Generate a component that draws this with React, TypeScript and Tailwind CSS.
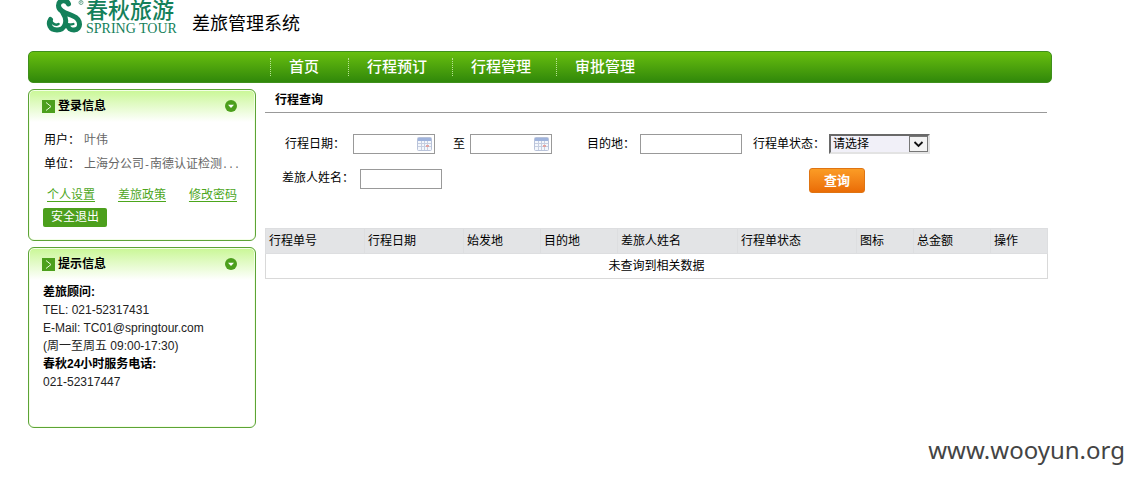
import React from 'react';

const navItems = [
  { label: '首页', width: 'w-[78px]' },
  { label: '行程预订', width: 'w-[104px]' },
  { label: '行程管理', width: 'w-[104px]' },
  { label: '审批管理', width: 'w-[104px]' },
];

const columns = [
  { label: '行程单号', width: 'w-[99px]' },
  { label: '行程日期', width: 'w-[99px]' },
  { label: '始发地', width: 'w-[77px]' },
  { label: '目的地', width: 'w-[77px]' },
  { label: '差旅人姓名', width: 'w-[120px]' },
  { label: '行程单状态', width: 'w-[119px]' },
  { label: '图标', width: 'w-[57px]' },
  { label: '总金额', width: 'w-[77px]' },
  { label: '操作', width: 'w-[57px]' },
];

function LogoMark() {
  return (
    <svg className="h-[34px] w-[39px] shrink-0" viewBox="0 0 39 34" fill="none" aria-hidden="true">
      <g stroke="#14805a" strokeLinecap="round" strokeLinejoin="round">
        <path d="M22.500 4C20.500 -1 12.500 0 12.500 5.500C12.500 11.500 20 13 27 16C35.500 19.500 35.500 29.500 28 30C24.500 30 22 28 22 25.500" strokeWidth="5" />
        <path d="M17 13C22.500 21 19 30 11 30C3.500 30 2 23.500 4.500 19.500" strokeWidth="5" />
        <path d="M5 20.500C6.500 24.500 10 25.500 12.500 24" strokeWidth="2.600" />
        <path d="M22.500 24.500C24.500 24.500 26 24.500 27.500 24" strokeWidth="2.200" />
      </g>
      <circle cx="35" cy="2.500" r="2" stroke="#70a995" strokeWidth="1" />
      <path d="M34.500 3.500V1.500H35.500V2.500H34.500" stroke="#70a995" strokeWidth=".6" />
    </svg>
  );
}

function CalendarIcon() {
  return (
    <svg className="h-[14px] w-[15px]" viewBox="0 0 15 14" aria-hidden="true">
      <rect x=".5" y=".5" width="14" height="13" rx="1" fill="#f4f7fc" stroke="#b9c3da" />
      <rect x="1" y="1" width="13" height="3" fill="#9fb3dc" />
      <path d="M1 6.500H14M1 9.500H14M4.500 4V13M7.500 4V13M10.500 4V13" stroke="#c6cee0" />
      <rect x="9" y="8" width="3" height="2" fill="#e3a3a0" />
    </svg>
  );
}

function DateField({ id, label }: { id: string; label: string }) {
  return (
    <span className="flex h-5 w-[82px] items-center border border-[#999] bg-white pr-[2px]">
      <input id={id} aria-label={label} className="h-full w-0 flex-1 px-1 outline-none" />
      <button type="button" aria-label={`选择${label}`}>
        <CalendarIcon />
      </button>
    </span>
  );
}

function Panel({ title, height, children }: { title: string; height: string; children: React.ReactNode }) {
  return (
    <section
      className={`${height} rounded-md border border-[#5ca336] bg-[linear-gradient(to_bottom,#c9f795_0px,#ffffff_32px)] px-[14px] shadow-[inset_0_0_0_1px_#f3ffe6]`}
    >
      <header className="-ml-px flex h-8 items-center">
        <svg className="mr-[3px] h-[13px] w-[13px]" viewBox="0 0 13 13" aria-hidden="true">
          <rect width="13" height="13" fill="#4c9f1c" />
          <path d="M4 2.500L9 6.500L4 10.500" fill="none" stroke="#e6f8d8" />
        </svg>
        <h2 className="flex-1 text-xs font-bold">{title}</h2>
        <button type="button" aria-label={`收起${title}`} className="mr-1">
          <svg className="h-3 w-3" viewBox="0 0 12 12" aria-hidden="true">
            <circle cx="6" cy="6" r="6" fill="#4c9f1c" />
            <path d="M3 4.700H9L6 8Z" fill="#fff" />
          </svg>
        </button>
      </header>
      {children}
    </section>
  );
}

export default function App() {
  return (
    <div className="bg-white font-['Liberation_Sans','Noto_Sans_CJK_SC',sans-serif] text-xs text-black">
      <div className="ml-7 max-w-[1024px]">
        <header className="flex h-[51px] items-start pl-[18px]">
          <LogoMark />
          <div className="ml-px w-[94px] whitespace-nowrap text-[#14805a]">
            <div className="text-[22px] font-medium leading-[22px]">春秋旅游</div>
            <div className="font-['Liberation_Serif',serif] text-sm leading-[14px]">SPRING TOUR</div>
          </div>
          <h1 className="ml-3 mt-[10px] text-lg leading-7">差旅管理系统</h1>
        </header>

        <nav className="flex h-8 items-center rounded-[5px] border border-[#3f8f1c] bg-linear-to-b from-[#68bf0f] to-[#30880a] pl-[241px]">
          {navItems.map((item) => (
            <a
              key={item.label}
              href="#"
              className={`${item.width} block h-[18px] border-l border-dotted border-[#b9e395] pl-[18px] text-[15px] font-medium leading-[18px] text-white`}
            >
              {item.label}
            </a>
          ))}
        </nav>

        <div className="mt-[6px] flex items-start gap-[9px]">
          <aside className="flex w-[228px] shrink-0 flex-col gap-[6px]">
            <Panel title="登录信息" height="min-h-[152px]">
              <dl className="pl-px pt-[6px] leading-6">
                <div className="flex gap-1">
                  <dt>用户：</dt>
                  <dd className="text-[#666]">叶伟</dd>
                </div>
                <div className="flex gap-1 whitespace-nowrap">
                  <dt>单位：</dt>
                  <dd className="text-[#666]">
                    上海分公司<span className="font-['Liberation_Mono',monospace] text-[10px]">-</span>南德认证检测
                    <span className="font-['Liberation_Mono',monospace] text-[10px]">...</span>
                  </dd>
                </div>
              </dl>
              <div className="mt-2 flex justify-between pl-1 pr-1 leading-[18px] text-[#4ca61c] underline underline-offset-2">
                <a href="#">个人设置</a>
                <a href="#">差旅政策</a>
                <a href="#">修改密码</a>
              </div>
              <button type="button" className="mt-1 block h-[19px] w-16 rounded-[2px] bg-[#4c9f1c] leading-[19px] text-white">
                安全退出
              </button>
            </Panel>

            <Panel title="提示信息" height="min-h-[181px]">
              <div className="pt-[3px] leading-[18px] text-[#222]">
                <p className="font-bold text-black">差旅顾问:</p>
                <p>TEL: 021-52317431</p>
                <p>E-Mail: TC01@springtour.com</p>
                <p>(周一至周五 09:00-17:30)</p>
                <p className="font-bold text-black">春秋24小时服务电话:</p>
                <p>021-52317447</p>
              </div>
            </Panel>
          </aside>

          <main className="mr-[5px] min-w-0 flex-1">
            <h2 className="h-6 border-b border-[#999] pl-[10px] text-xs font-bold leading-[22px]">行程查询</h2>

            <form onSubmit={(event) => event.preventDefault()}>
              <div className="mt-[21px] flex h-5 items-center whitespace-nowrap pl-5">
                <label htmlFor="date-from" className="mr-2">行程日期：</label>
                <DateField id="date-from" label="开始日期" />
                <label htmlFor="date-to" className="ml-[18px] mr-[5px]">至</label>
                <DateField id="date-to" label="结束日期" />
                <label htmlFor="destination" className="ml-[35px] mr-[5px]">目的地：</label>
                <input id="destination" className="h-5 w-[102px] border border-[#999] px-1" />
                <label htmlFor="status" className="ml-[11px] mr-1">行程单状态：</label>
                <span className="grid h-5 w-[101px] items-center">
                  <select
                    id="status"
                    className="col-start-1 row-start-1 h-5 w-full appearance-none border-2 border-b-[#e3e3e3] border-l-[#696969] border-r-[#e3e3e3] border-t-[#696969] bg-[#f1f0f8] pl-[2px] leading-4"
                  >
                    <option>请选择</option>
                  </select>
                  <svg className="pointer-events-none col-start-1 row-start-1 mr-[2px] h-4 w-[19px] justify-self-end" viewBox="0 0 19 16" aria-hidden="true">
                    <rect x=".5" y=".5" width="18" height="15" fill="#f3f3f3" stroke="#777" />
                    <path d="M5.500 6L9.500 10L13.500 6" fill="none" stroke="#111" strokeWidth="1.800" />
                  </svg>
                </span>
              </div>
              <div className="mt-[14px] flex h-[25px] items-start pl-[17px]">
                <label htmlFor="traveler" className="mr-[6px] leading-5">差旅人姓名：</label>
                <input id="traveler" className="mt-px h-5 w-[82px] border border-[#999] px-1" />
                <button
                  type="submit"
                  className="ml-[367px] h-[25px] w-14 rounded-[3px] border border-[#df7412] bg-linear-to-b from-[#fb9c25] to-[#ea6c05] text-[13px] font-bold leading-5 text-white"
                >
                  查询
                </button>
              </div>
            </form>

            <table className="mt-[35px] w-full table-fixed border-collapse border border-[#d9d9d9] text-left">
              <thead>
                <tr className="h-[25px] bg-[#e3e4e6]">
                  {columns.map((column) => (
                    <th key={column.label} scope="col" className={`${column.width} border border-[#dddee0] p-0 pl-[3px] font-normal`}>
                      {column.label}
                    </th>
                  ))}
                </tr>
              </thead>
              <tbody>
                <tr className="h-[25px]">
                  <td colSpan={9} className="border border-[#d9d9d9] p-0 text-center">未查询到相关数据</td>
                </tr>
              </tbody>
            </table>
          </main>
        </div>
      </div>
      <footer className="mt-1 pr-2 text-right font-['Noto_Sans',sans-serif] text-2xl leading-9 text-[#444]">www.wooyun.org</footer>
    </div>
  );
}
